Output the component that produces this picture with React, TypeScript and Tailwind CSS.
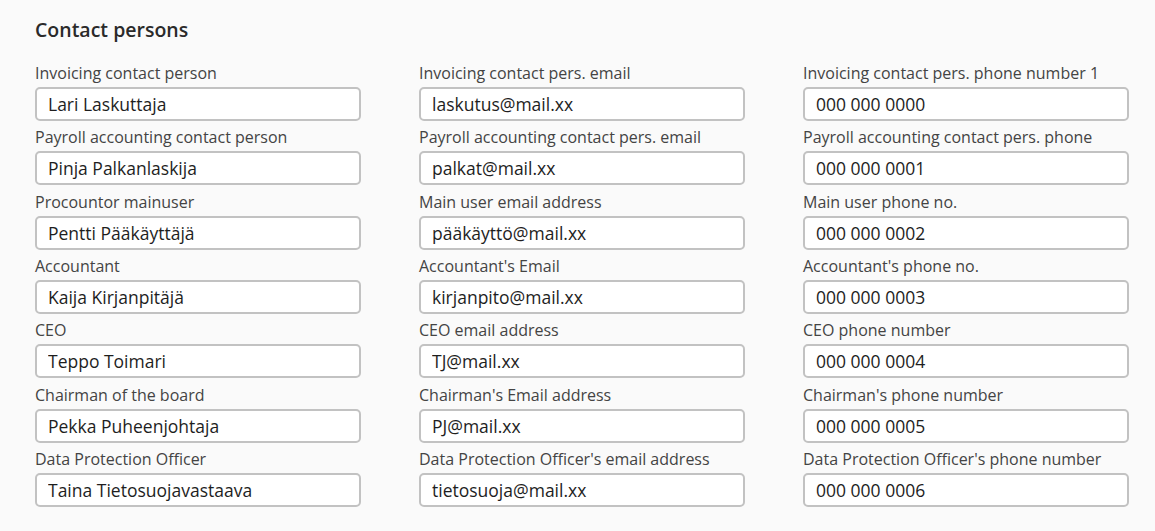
const rows: [string, string][][] = [
  [
    ['Invoicing contact person', 'Lari Laskuttaja'],
    ['Invoicing contact pers. email', 'laskutus@mail.xx'],
    ['Invoicing contact pers. phone number 1', '000 000 0000'],
  ],
  [
    ['Payroll accounting contact person', 'Pinja Palkanlaskija'],
    ['Payroll accounting contact pers. email', 'palkat@mail.xx'],
    ['Payroll accounting contact pers. phone', '000 000 0001'],
  ],
  [
    ['Procountor mainuser', 'Pentti Pääkäyttäjä'],
    ['Main user email address', 'pääkäyttö@mail.xx'],
    ['Main user phone no.', '000 000 0002'],
  ],
  [
    ['Accountant', 'Kaija Kirjanpitäjä'],
    ["Accountant's Email", 'kirjanpito@mail.xx'],
    ["Accountant's phone no.", '000 000 0003'],
  ],
  [
    ['CEO', 'Teppo Toimari'],
    ['CEO email address', 'TJ@mail.xx'],
    ['CEO phone number', '000 000 0004'],
  ],
  [
    ['Chairman of the board', 'Pekka Puheenjohtaja'],
    ["Chairman's Email address", 'PJ@mail.xx'],
    ["Chairman's phone number", '000 000 0005'],
  ],
  [
    ['Data Protection Officer', 'Taina Tietosuojavastaava'],
    ["Data Protection Officer's email address", 'tietosuoja@mail.xx'],
    ["Data Protection Officer's phone number", '000 000 0006'],
  ],
];

function Field({ label, value }: { label: string; value: string }) {
  return (
    <label className="flex flex-col">
      <span className="text-[16px] leading-[20px] text-[#444]">{label}</span>
      <input
        className="mt-[4px] h-[34px] w-[326px] rounded-[5px] border-2 border-[#c2c2c2] bg-white px-[11px] text-[17.5px] text-[#1e1e1e] outline-none"
        defaultValue={value}
      />
    </label>
  );
}

export default function App() {
  return (
    <main className="min-h-screen bg-[#fafafa] px-[35px] pt-[17px] font-['Open_Sans',sans-serif]">
      <h2 className="text-[19.5px] font-semibold leading-[26px] text-[#2a2a2a]">Contact persons</h2>
      <div className="mt-[20px] grid grid-cols-[326px_326px_326px] gap-x-[58px] gap-y-[6.33px]">
        {rows.flat().map(([label, value]) => (
          <Field key={label} label={label} value={value} />
        ))}
      </div>
    </main>
  );
}
